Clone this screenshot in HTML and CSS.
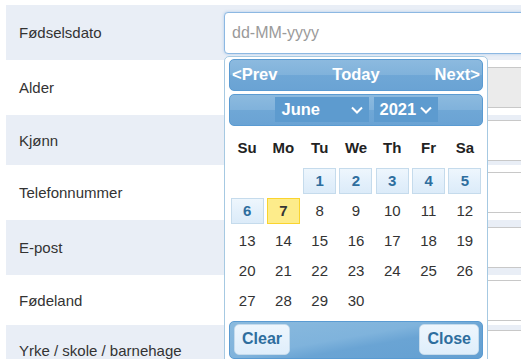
FILE: index.html
```html
<!DOCTYPE html>
<html lang="no">
<head>
    <meta charset="UTF-8">
    <title>Registrering</title>
    <link rel="stylesheet" href="styles.css">
</head>
<body>
    <div class="form">
        <div class="row alt">
            <div class="label">Fødselsdato</div>
            <div class="field">
                <div class="date-wrap">
                    <input type="text" class="input focus" placeholder="dd-MM-yyyy">

                    <!-- datepicker popup -->
                    <div class="datepicker">
                        <div class="dp-bar dp-nav">
                            <span>&lt;Prev</span>
                            <span>Today</span>
                            <span>Next&gt;</span>
                        </div>
                        <div class="dp-bar dp-title">
                            <div class="dp-select month">
                                <span>June</span>
                                <svg width="12" height="8" viewBox="0 0 12 8"><path d="M1 1.5 L6 6.5 L11 1.5" fill="none" stroke="#fff" stroke-width="2"/></svg>
                            </div>
                            <div class="dp-select year">
                                <span>2021</span>
                                <svg width="12" height="8" viewBox="0 0 12 8"><path d="M1 1.5 L6 6.5 L11 1.5" fill="none" stroke="#fff" stroke-width="2"/></svg>
                            </div>
                        </div>
                        <div class="dp-grid">
                            <div class="wd">Su</div><div class="wd">Mo</div><div class="wd">Tu</div><div class="wd">We</div><div class="wd">Th</div><div class="wd">Fr</div><div class="wd">Sa</div>

                            <div class="day"></div><div class="day"></div>
                            <div class="day"><span class="cell hl">1</span></div>
                            <div class="day"><span class="cell hl">2</span></div>
                            <div class="day"><span class="cell hl">3</span></div>
                            <div class="day"><span class="cell hl">4</span></div>
                            <div class="day"><span class="cell hl">5</span></div>

                            <div class="day"><span class="cell hl">6</span></div>
                            <div class="day"><span class="cell today">7</span></div>
                            <div class="day"><span class="cell">8</span></div>
                            <div class="day"><span class="cell">9</span></div>
                            <div class="day"><span class="cell">10</span></div>
                            <div class="day"><span class="cell">11</span></div>
                            <div class="day"><span class="cell">12</span></div>

                            <div class="day"><span class="cell">13</span></div>
                            <div class="day"><span class="cell">14</span></div>
                            <div class="day"><span class="cell">15</span></div>
                            <div class="day"><span class="cell">16</span></div>
                            <div class="day"><span class="cell">17</span></div>
                            <div class="day"><span class="cell">18</span></div>
                            <div class="day"><span class="cell">19</span></div>

                            <div class="day"><span class="cell">20</span></div>
                            <div class="day"><span class="cell">21</span></div>
                            <div class="day"><span class="cell">22</span></div>
                            <div class="day"><span class="cell">23</span></div>
                            <div class="day"><span class="cell">24</span></div>
                            <div class="day"><span class="cell">25</span></div>
                            <div class="day"><span class="cell">26</span></div>

                            <div class="day"><span class="cell">27</span></div>
                            <div class="day"><span class="cell">28</span></div>
                            <div class="day"><span class="cell">29</span></div>
                            <div class="day"><span class="cell">30</span></div>
                            <div class="day"></div><div class="day"></div><div class="day"></div>
                        </div>
                        <div class="dp-bar dp-foot">
                            <span class="dp-btn">Clear</span>
                            <span class="dp-btn">Close</span>
                        </div>
                    </div>
                </div>
            </div>
        </div>

        <div class="row">
            <div class="label">Alder</div>
            <div class="field"><input type="text" class="input" disabled></div>
        </div>
        <div class="row alt short">
            <div class="label">Kjønn</div>
            <div class="field"><input type="text" class="input"></div>
        </div>
        <div class="row">
            <div class="label">Telefonnummer</div>
            <div class="field"><input type="text" class="input"></div>
        </div>
        <div class="row alt">
            <div class="label">E-post</div>
            <div class="field"><input type="text" class="input"></div>
        </div>
        <div class="row short">
            <div class="label">Fødeland</div>
            <div class="field"><input type="text" class="input"></div>
        </div>
        <div class="row alt short">
            <div class="label">Yrke / skole / barnehage</div>
            <div class="field"><input type="text" class="input"></div>
        </div>
    </div>
</body>
</html>
```

FILE: styles.css
```css
html, body {
    overflow: hidden;
}
body {
    margin: 0;
    padding: 5px 0 0 6px;
    font-family: "Liberation Sans", Arial, sans-serif;
    color: #333;
    background: #fff;
}
.form {
    width: 580px;
}
.row {
    display: flex;
    height: 55px;
}
.row.short {
    height: 50px;
}
.row.alt {
    background: #e9eef6;
}
.label {
    width: 218px;
    padding-left: 13px;
    box-sizing: border-box;
    display: flex;
    align-items: center;
    font-size: 15px;
}
.field {
    flex: 1;
    display: flex;
    align-items: center;
}
.date-wrap {
    position: relative;
    width: 100%;
}
.input {
    display: block;
    width: 100%;
    height: 41px;
    box-sizing: border-box;
    border: 1px solid #c8c8c8;
    border-radius: 4px;
    padding: 0 7px;
    font-family: inherit;
    font-size: 16px;
    background: #fff;
    outline: none;
}
.input:disabled {
    background: #ebebeb;
}
.input.focus {
    height: 42px;
    border-color: #8cb8e2;
    box-shadow: 0 0 3px rgba(102, 160, 220, 0.45);
}
.input::placeholder {
    color: #9a9a9a;
}

/* datepicker */
.datepicker {
    position: absolute;
    left: 0;
    top: 44px;
    width: 264px;
    box-sizing: border-box;
    padding: 2px 4px 4px;
    background: #fff;
    border: 1px solid #a6c9e2;
    border-radius: 5px 5px 0 0;
    z-index: 5;
}
.dp-bar {
    display: flex;
    align-items: center;
    box-sizing: border-box;
    border: 1px solid #5a9bd2;
    border-radius: 5px;
    background: linear-gradient(to bottom, #8cbadf 0%, #80b2db 50%, #6fa7d6 51%, #6aa3d4 100%);
    color: #fff;
    font-weight: bold;
    font-size: 16.5px;
}
.dp-nav {
    height: 32px;
    justify-content: space-between;
    padding: 0 2px;
}
.dp-title {
    height: 32px;
    margin-top: 3px;
    justify-content: center;
    gap: 5px;
}
.dp-select {
    height: 25px;
    display: flex;
    align-items: center;
    justify-content: space-between;
    box-sizing: border-box;
    padding: 0 6px 0 7px;
    background: #5d9bcf;
}
.dp-select.month {
    width: 94px;
}
.dp-select.year {
    width: 64px;
    padding-left: 6px;
}
.dp-grid {
    display: grid;
    grid-template-columns: repeat(7, 1fr);
    grid-template-rows: 36px;
    grid-auto-rows: 30px;
    margin-top: 4px;
}
.wd {
    display: flex;
    align-items: center;
    justify-content: center;
    font-weight: bold;
    font-size: 15px;
    color: #222;
}
.day {
    display: flex;
    align-items: center;
    justify-content: center;
}
.cell {
    display: flex;
    align-items: center;
    justify-content: center;
    width: 33px;
    height: 26px;
    box-sizing: border-box;
    font-size: 15px;
    color: #333;
}
.cell.hl {
    border: 1px solid #c5dbec;
    background: linear-gradient(to bottom, #eef6fd 0%, #e3f0fb 55%, #dcebf9 100%);
    color: #2e6e9e;
    font-weight: bold;
}
.cell.today {
    border: 1px solid #fad42e;
    background: #fdec8b;
    color: #363636;
    font-weight: bold;
}
.dp-foot {
    height: 38px;
    margin-top: 5px;
    justify-content: space-between;
    padding: 0 3px 1px 4px;
    font-size: 16px;
    background: linear-gradient(170deg, #8abade 0%, #7fb3dc 45%, #6aa4d4 60%, #64a0d2 100%);
}
.dp-btn {
    height: 29px;
    display: flex;
    align-items: center;
    padding: 0 7px;
    border: 1px solid #c5dbec;
    border-radius: 5px;
    background: linear-gradient(to bottom, #eef6fd, #dfeefb);
    color: #2e6e9e;
}
```
